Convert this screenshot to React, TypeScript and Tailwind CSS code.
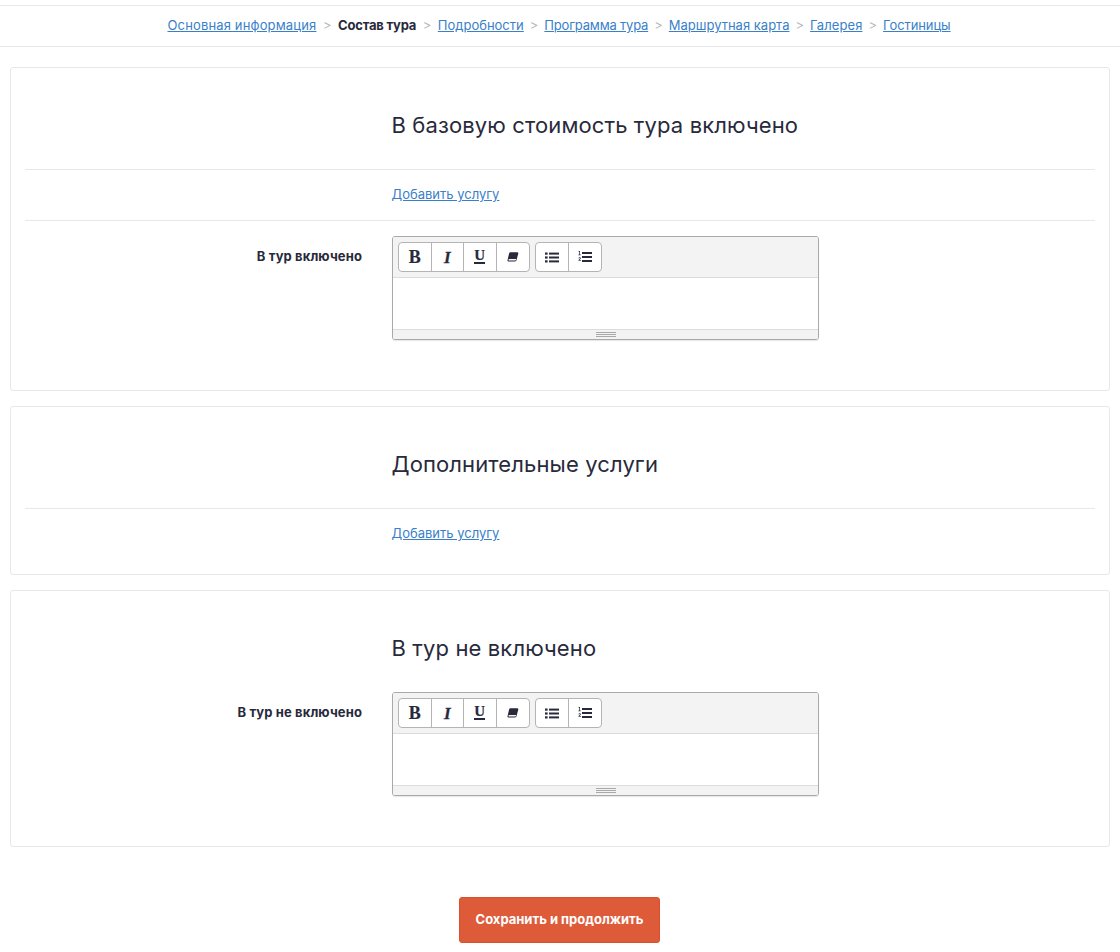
import React from "react";

const font = "font-['Inter','Noto_Sans',sans-serif]";
const steps = [
  { t: "Основная информация", c: "tracking-[0.15px]", sep: "" },
  { t: "Состав тура", c: "tracking-[-0.2px]", sep: "mx-[6.5px]" },
  { t: "Подробности", c: "", sep: "mx-[6.5px]" },
  { t: "Программа тура", c: "tracking-[-0.2px]", sep: "mx-[6px]" },
  { t: "Маршрутная карта", c: "", sep: "mx-[6px]" },
  { t: "Галерея", c: "tracking-[0.1px]", sep: "mx-[6px]" },
  { t: "Гостиницы", c: "tracking-[-0.1px]", sep: "mx-[6px]" },
];

function Nav() {
  return (
    <nav className="mt-[5px] flex h-[42px] items-center justify-center border-y border-[#e8e8e8] pr-[2px] text-[13px]">
      {steps.map((s, i) => (
        <React.Fragment key={s.t}>
          {i > 0 && <span className={`${s.sep} text-[#b8b8b8]`}>&gt;</span>}
          {i === 1 ? (
            <span className={`font-bold text-[#282a3c] ${s.c}`}>{s.t}</span>
          ) : (
            <a className={`text-[#3a7fc9] underline ${s.c}`}>{s.t}</a>
          )}
        </React.Fragment>
      ))}
    </nav>
  );
}

function Title({ children }: { children: React.ReactNode }) {
  return <h2 className="ml-[366.5px] mt-[43px] mb-[30px] h-7 text-[22px] leading-7 tracking-[0.12px] text-[#282a3c]">{children}</h2>;
}

function AddRow() {
  return (
    <div className="flex h-[51px] items-center border-t border-[#e8e8e8] pl-[366.5px]">
      <a className="text-[13px] text-[#3a7fc9] underline">Добавить услугу</a>
    </div>
  );
}

function Btn({ children, last }: { children: React.ReactNode; last?: boolean }) {
  return (
    <div className={`flex h-full w-[32.5px] items-center justify-center text-[#282a3c] ${last ? "" : "border-r border-[#b4b4b4]"}`}>
      {children}
    </div>
  );
}

const Bold = () => (
  <span className="font-['Liberation_Serif',serif] text-[18px] font-bold leading-none [-webkit-text-stroke:0.2px_#282a3c]">B</span>
);
const Italic = () => (
  <span className="font-['Liberation_Serif',serif] text-[17px] font-bold italic leading-none [-webkit-text-stroke:0.3px_#282a3c]">I</span>
);
const Under = () => (
  <span className="flex flex-col items-center">
    <span className="font-['Liberation_Serif',serif] text-[15px] font-bold leading-[11px] [-webkit-text-stroke:0.2px_#282a3c]">U</span>
    <span className="mt-[1px] h-[1.5px] w-[11px] bg-[#282a3c]" />
  </span>
);
const Eraser = () => (
  <svg width="12" height="10" viewBox="0 0 11 10">
    <path d="M3 .3H9.800C10.600.3 11 .8 10.800 1.500L9 8.300C8.800 9 8.200 9.500 7.500 9.500H1.200C.4 9.500-.1 9-.0 8.200L1.600 1.400C1.800.7 2.300.3 3 .3Z" fill="#282a3c" />
    <path d="M1.200 7H8.700L8.400 8.100C8.300 8.400 8 8.600 7.600 8.600H1.300C1 8.600.9 8.400 1 8z" fill="#f5f5f5" />
  </svg>
);
const Ul = () => (
  <svg width="14" height="11" viewBox="0 0 14 11" fill="#282a3c">
    <rect x="0" y="0.5" width="2.600" height="2.200" /><rect x="0" y="4.400" width="2.600" height="2.200" /><rect x="0" y="8.300" width="2.600" height="2.200" />
    <rect x="4" y="0.6" width="10" height="2" /><rect x="4" y="4.500" width="10" height="2" /><rect x="4" y="8.400" width="10" height="2" />
  </svg>
);
const Ol = () => (
  <svg width="14" height="12" viewBox="0 0 14 12" fill="#282a3c">
    <rect x="4" y="1" width="10" height="2" /><rect x="4" y="5" width="10" height="2" /><rect x="4" y="9" width="10" height="2" />
    <path d="M.8 0h1.100v3.600H2.700v.6H.4v-.6h.8V.9H.6zM.4 7.200C.6 6.500 1 6.300 1.600 6.300c.8 0 1.200.5 1.200 1 0 .8-.9 1.200-1.400 1.800h1.400v.7H.4c0-1.300 1.600-1.800 1.600-2.500 0-.5-.8-.4-1 .1z" />
  </svg>
);

function Editor() {
  return (
    <div className="h-[104px] w-[427px] overflow-hidden rounded-[3px] border border-[#a9a9a9] shadow-[0_1px_1px_rgba(0,0,0,0.1)]">
      <div className="flex h-[41px] items-center gap-[5px] border-b border-[#dcdcdc] bg-[#f3f3f3] pl-[5px]">
        <div className="flex h-[30px] items-center overflow-hidden rounded-[4px] border border-[#b4b4b4] bg-white">
          <Btn><Bold /></Btn>
          <Btn><Italic /></Btn>
          <Btn><Under /></Btn>
          <Btn last><Eraser /></Btn>
        </div>
        <div className="flex h-[30px] items-center overflow-hidden rounded-[4px] border border-[#b4b4b4] bg-white">
          <Btn><Ul /></Btn>
          <Btn last><Ol /></Btn>
        </div>
      </div>
      <div className="h-[51px] bg-white" />
      <div className="flex h-[10px] flex-col items-center justify-center gap-px border-t border-[#dcdcdc] bg-[#f3f3f3]">
        <div className="h-px w-5 bg-[#a9a9a9]" />
        <div className="h-px w-5 bg-[#a9a9a9]" />
        <div className="h-px w-5 bg-[#a9a9a9]" />
      </div>
    </div>
  );
}

function EditorRow({ label }: { label: string }) {
  return (
    <div className="flex items-start">
      <label className="w-[337px] pt-[12px] text-right text-[13px] font-bold leading-[16px] tracking-[0.12px] text-[#282a3c]">{label}</label>
      <div className="ml-[30px]"><Editor /></div>
    </div>
  );
}

export default function App() {
  return (
    <div className={`h-[952px] w-[1120px] overflow-hidden bg-white ${font}`}>
      <Nav />
      <main className="mx-[10px] mt-5 flex flex-col gap-[15px]">
        <section className="h-[324px] rounded-[3px] border border-[#e8e8e8] px-[14px]">
          <Title>В базовую стоимость тура включено</Title>
          <AddRow />
          <div className="border-t border-[#e8e8e8] pt-[15px]">
            <EditorRow label="В тур включено" />
          </div>
        </section>
        <section className="h-[169px] rounded-[3px] border border-[#e8e8e8] px-[14px]">
          <Title>Дополнительные услуги</Title>
          <AddRow />
        </section>
        <section className="h-[257px] rounded-[3px] border border-[#e8e8e8] px-[14px]">
          <Title>В тур не включено</Title>
          <EditorRow label="В тур не включено" />
        </section>
      </main>
      <div className="mt-[50px] flex justify-center pr-px">
        <button className="h-[46px] w-[201px] rounded-[3px] border border-[#d9512c] bg-[#de5b3a] text-[13px] font-bold text-white">
          Сохранить и продолжить
        </button>
      </div>
    </div>
  );
}
